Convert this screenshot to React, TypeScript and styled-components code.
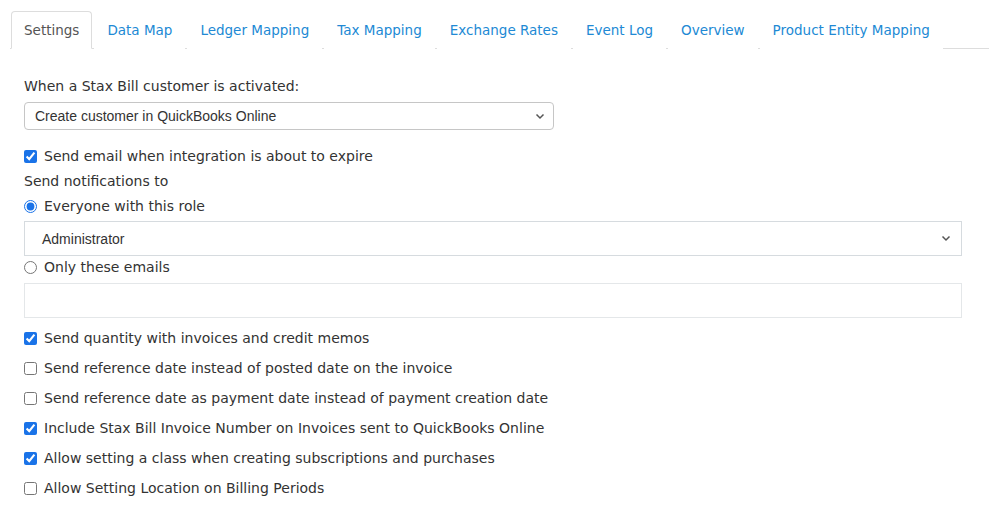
import React from "react";
import styled, { createGlobalStyle } from "styled-components";

const GlobalStyle = createGlobalStyle`
  body {
    margin: 0;
    background: #fff;
    font-family: "DejaVu Sans", Verdana, sans-serif;
    color: #333;
  }
`;

const Page = styled.div`
  padding: 11px 0 0 10px;
`;

const TabBar = styled.ul`
  display: flex;
  margin: 0;
  padding: 0 0 0 1px;
  list-style: none;
  border-bottom: 1px solid #ddd;
`;

const Tab = styled.li<{ $active?: boolean }>`
  height: 36px;
  line-height: 36px;
  padding: 0 12px;
  margin-right: 2px;
  margin-bottom: -1px;
  font-size: 13.5px;
  color: ${(p) => (p.$active ? "#555" : "#2189d4")};
  background: #fff;
  border: 1px solid ${(p) => (p.$active ? "#ddd" : "transparent")};
  border-bottom-color: ${(p) => (p.$active ? "#fff" : "transparent")};
  border-radius: 4px 4px 0 0;
`;

const Content = styled.div`
  display: flex;
  flex-direction: column;
  padding: 27px 27px 0 14px;
  font-size: 14px;
`;

const Label = styled.div<{ $top?: number }>`
  line-height: 20px;
  margin-top: ${(p) => p.$top ?? 0}px;
`;

const SelectBox = styled.div<{ $wide?: boolean }>`
  display: flex;
  align-items: center;
  justify-content: space-between;
  box-sizing: border-box;
  width: ${(p) => (p.$wide ? "100%" : "530px")};
  height: ${(p) => (p.$wide ? "35px" : "28px")};
  margin-top: ${(p) => (p.$wide ? "5px" : "6px")};
  padding: 0 ${(p) => (p.$wide ? "10px 0 17px" : "8px 0 10px")};
  border: 1px solid ${(p) => (p.$wide ? "#d6dbdf" : "#c6c6c6")};
  border-radius: ${(p) => (p.$wide ? "0" : "4px")};
  font-family: "Liberation Sans", Arial, sans-serif;
  font-size: 14px;
  color: #333;
`;

const TextInput = styled.div`
  box-sizing: border-box;
  width: 100%;
  height: 35px;
  margin-top: 6px;
  border: 1px solid #e4e7e9;
`;

const Row = styled.label<{ $top?: number }>`
  display: flex;
  align-items: center;
  gap: 7px;
  height: 20px;
  margin-top: ${(p) => p.$top ?? 5}px;
  line-height: 20px;

  input {
    width: 13px;
    height: 13px;
    margin: 0;
    accent-color: #1a73e8;
  }
`;

const Chevron = () => (
  <svg width="10" height="7" viewBox="0 0 10 7">
    <path d="M1.5 1.5 5 5 8.5 1.5" fill="none" stroke="#555" strokeWidth="1.5" />
  </svg>
);

const tabs = [
  "Settings",
  "Data Map",
  "Ledger Mapping",
  "Tax Mapping",
  "Exchange Rates",
  "Event Log",
  "Overview",
  "Product Entity Mapping",
];

const options: [string, boolean][] = [
  ["Send quantity with invoices and credit memos", true],
  ["Send reference date instead of posted date on the invoice", false],
  ["Send reference date as payment date instead of payment creation date", false],
  ["Include Stax Bill Invoice Number on Invoices sent to QuickBooks Online", true],
  ["Allow setting a class when creating subscriptions and purchases", true],
  ["Allow Setting Location on Billing Periods", false],
];

export default function App() {
  return (
    <Page>
      <GlobalStyle />
      <TabBar>
        {tabs.map((t, i) => (
          <Tab key={t} $active={i === 0}>
            {t}
          </Tab>
        ))}
      </TabBar>
      <Content>
        <Label>When a Stax Bill customer is activated:</Label>
        <SelectBox>
          <span>Create customer in QuickBooks Online</span>
          <Chevron />
        </SelectBox>
        <Row $top={16}>
          <input type="checkbox" defaultChecked />
          Send email when integration is about to expire
        </Row>
        <Label $top={5}>Send notifications to</Label>
        <Row>
          <input type="radio" name="notify" defaultChecked />
          Everyone with this role
        </Row>
        <SelectBox $wide>
          <span>Administrator</span>
          <Chevron />
        </SelectBox>
        <Row $top={1}>
          <input type="radio" name="notify" />
          Only these emails
        </Row>
        <TextInput />
        {options.map(([text, on]) => (
          <Row key={text} $top={10}>
            <input type="checkbox" defaultChecked={on} />
            {text}
          </Row>
        ))}
      </Content>
    </Page>
  );
}
